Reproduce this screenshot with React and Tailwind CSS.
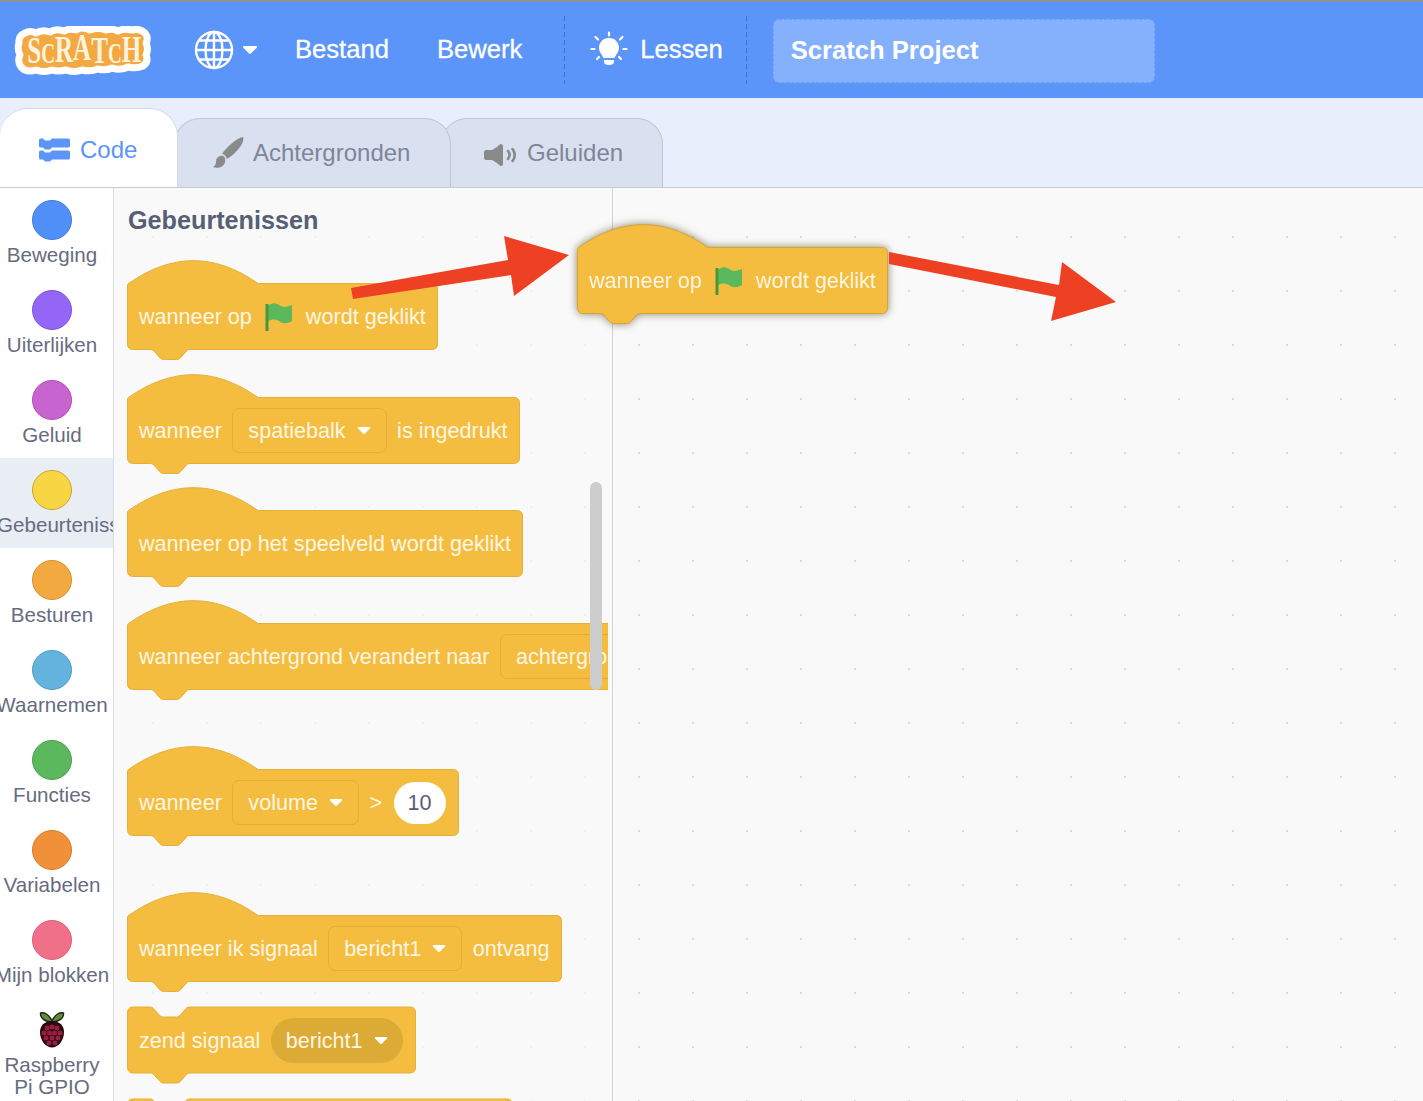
const caret = "M1 1.5 Q0 0 2 0 H12 Q14 0 13 1.5 L8 6.5 Q7 7.5 6 6.5 Z";

function Caret({ className = "w-[14px] h-[8px]" }) {
  return (
    <svg viewBox="0 0 14 8" className={className + " shrink-0"}>
      <path d={caret} fill="#ffffff" />
    </svg>
  );
}

function Flag() {
  return (
    <svg viewBox="0 0 27 28" className="w-[27px] h-[28px] shrink-0">
      <path d="M3 3 C7 -1 11 0 14 2 C18 5 22 4 27 2 V18 C22 21 18 21 14 18 C10 16 7 16 3 18 Z" fill="#5cb85c" />
      <rect x="0.5" y="1" width="3" height="27" fill="#45993d" />
    </svg>
  );
}

function notch() {
  return "c-2.2 0 -3.3 1.2 -4.4 2.5 l-4.4 5 c-1.1 1.2 -2.2 2.5 -4.4 2.5 h-13.2 c-2.2 0 -3.3 -1.3 -4.4 -2.5 l-4.4 -5 c-1.1 -1.3 -2.2 -2.5 -4.4 -2.5";
}

function hatPath(w, h) {
  return `M0.5 25 C0.5 24.5 1 24 1.5 23.5 C45 -7 88 -7 131 23.5 H${w - 5.5} a5 5 0 0 1 5 5 V${h - 15.5} a5 5 0 0 1 -5 5 H63 ${notch()} H5.5 a5 5 0 0 1 -5 -5 Z`;
}

function stackPath(w, h) {
  return `M0.5 6 a5 5 0 0 1 5 -5 H23 c2.2 0 3.3 1.2 4.4 2.5 l4.4 5 c1.1 1.2 2.2 2.5 4.4 2.5 h13.2 c2.2 0 3.3 -1.3 4.4 -2.5 l4.4 -5 c1.1 -1.3 2.2 -2.5 4.4 -2.5 H${w - 5.5} a5 5 0 0 1 5 5 V${h - 16} a5 5 0 0 1 -5 5 H63 ${notch()} H5.5 a5 5 0 0 1 -5 -5 Z`;
}

function Block({ w, h = 100, stack, mt, children, stroke = "#e6b038" }) {
  return (
    <div className="relative shrink-0" style={{ width: w, height: h, marginTop: mt }}>
      <svg className="absolute left-0 top-0 overflow-visible" width={w} height={h} viewBox={`0 0 ${w} ${h}`}>
        <path d={stack ? stackPath(w, h) : hatPath(w, h)} fill="#f4bd3f" stroke={stroke} strokeWidth="1" />
      </svg>
      <div
        className={
          "absolute left-0 right-0 flex items-center gap-[10.5px] px-[12px] whitespace-nowrap text-[21.6px] leading-none text-[#fff6e3] " +
          (stack ? "top-[1px] h-[67px]" : "top-[23px] h-[67px]")
        }
      >
        {children}
      </div>
    </div>
  );
}

function Field({ children, round }) {
  return (
    <div
      className={
        "flex h-[45px] shrink-0 items-center gap-[11px] px-[15px] " +
        (round ? "rounded-full bg-[#dcab36]" : "rounded-[7px] border border-[#e3ae37] bg-[#f4bd3f]")
      }
    >
      <span>{children}</span>
      <Caret />
    </div>
  );
}

const cats = [
  ["Beweging", "bg-[#4f8ff7] border-[#3f7bdc]"],
  ["Uiterlijken", "bg-[#9566f5] border-[#8052dd]"],
  ["Geluid", "bg-[#c764d0] border-[#b04fb8]"],
  ["Gebeurtenissen", "bg-[#f8d643] border-[#cfa22f]"],
  ["Besturen", "bg-[#f2a93f] border-[#d8922c]"],
  ["Waarnemen", "bg-[#64b3de] border-[#4e9cc4]"],
  ["Functies", "bg-[#5cb85c] border-[#4ea04c]"],
  ["Variabelen", "bg-[#f09038] border-[#d97b28]"],
  ["Mijn blokken", "bg-[#ef7088] border-[#dd5f78]"],
];

function Raspberry() {
  const dots = [
    [9, 17], [14, 16], [19, 17], [6, 22], [11.5, 22], [16.5, 22], [22, 22],
    [8, 27], [14, 27], [20, 27], [11, 32], [17, 32],
  ];
  return (
    <svg viewBox="0 0 28 37" className="h-[37px] w-[28px]">
      <path d="M14 10 C11 3 6 1 2.5 2 C2 7 7 11 14 11 Z" fill="#5d8f3a" stroke="#20261a" strokeWidth="1.4" />
      <path d="M14 10 C17 3 22 1 25.5 2 C26 7 21 11 14 11 Z" fill="#5d8f3a" stroke="#20261a" strokeWidth="1.4" />
      <path d="M14 10 C22 10 26 15 26 21 C26 30 20 36.5 14 36.5 C8 36.5 2 30 2 21 C2 15 6 10 14 10 Z" fill="#2a0b14" />
      {dots.map(([x, y]) => (
        <circle key={x + "-" + y} cx={x} cy={y} r="2.5" fill="#9e1b40" />
      ))}
    </svg>
  );
}

function Sidebar() {
  return (
    <div className="h-full w-[114px] shrink-0 overflow-hidden border-r border-[#d9dce3] bg-white text-[20.6px] leading-[22px] text-[#666c80]">
      {cats.map(([name, color]) => {
        const active = name === "Gebeurtenissen";
        return (
          <div
            key={name}
            className={"flex h-[90px] flex-col items-center pr-[9px] pt-3 " + (active ? "bg-[#e9eef4]" : "")}
          >
            <div className={"h-[40px] w-[40px] shrink-0 rounded-full border " + color} />
            <div className={"mt-[4px] whitespace-nowrap " + (active ? "-ml-[3px] self-start" : "")}>{name}</div>
          </div>
        );
      })}
      <div className="flex flex-col items-center pr-[9px] pt-[13px] text-center">
        <Raspberry />
        <div className="mt-[6px]">
          Raspberry
          <br />
          Pi GPIO
        </div>
      </div>
    </div>
  );
}

function Palette() {
  return (
    <div className="relative h-full w-[499px] shrink-0 overflow-hidden border-r border-[#cfd3da] bg-[#f9f9f9] bg-[radial-gradient(circle,#f0f0f0_1px,transparent_1.5px)] bg-[length:54px_54px] bg-[position:12px_22px]">
      <div className="h-full w-[494px] overflow-hidden pl-[13px] pt-[16px]">
        <div className="ml-px text-[25.2px] font-bold leading-[32px] text-[#575e75]">Gebeurtenissen</div>
        <Block w={311} mt={24}>
          <span>wanneer op</span>
          <span className="ml-[3px]"><Flag /></span>
          <span className="ml-[3px]">wordt geklikt</span>
        </Block>
        <Block w={393} mt={14}>
          <span>wanneer</span>
          <Field>spatiebalk</Field>
          <span>is ingedrukt</span>
        </Block>
        <Block w={396} mt={13}>
          <span>wanneer op het speelveld wordt geklikt</span>
        </Block>
        <Block w={560} mt={13}>
          <span>wanneer achtergrond verandert naar</span>
          <Field>achtergrond1</Field>
        </Block>
        <Block w={332} mt={46}>
          <span>wanneer</span>
          <Field>volume</Field>
          <span>&gt;</span>
          <div className="ml-px flex h-[42px] w-[52px] items-center justify-center rounded-full bg-white text-[#575e75]">10</div>
        </Block>
        <Block w={435} mt={46}>
          <span>wanneer ik signaal</span>
          <Field>bericht1</Field>
          <span>ontvang</span>
        </Block>
        <Block w={289} h={78} stack mt={14}>
          <span>zend signaal</span>
          <Field round>bericht1</Field>
        </Block>
        <Block w={386} h={78} stack mt={14} />
      </div>
      <div className="absolute left-[476px] top-[294px] h-[208px] w-[12px] rounded-full bg-[#cdcdcd]" />
    </div>
  );
}

function Logo() {
  return (
    <svg viewBox="0 0 138 49" className="h-[49px] w-[138px] shrink-0">
      <path
        d="M11 7 Q16 4 22 7 Q28 3 36 6 Q42 2 50 5 Q56 2 62 4 Q68 0 76 4 Q84 1 92 4 Q98 2 104 5 Q110 2 118 4 Q126 2 131 7 Q135 12 132 17 Q135 23 132 29 Q135 36 129 40 Q122 43 114 41 Q106 45 98 42 Q92 45 84 43 Q76 46 68 44 Q60 47 52 44 Q44 46 38 44 Q30 47 22 44 Q12 47 7 41 Q3 35 6 29 Q3 23 5 17 Q4 10 11 7Z"
        fill="#f3a842"
        stroke="#ffffff"
        strokeWidth="7"
        strokeLinejoin="round"
      />
      <text transform="scale(0.66 1)" fontFamily="'Liberation Serif', serif" fontWeight="700" fontSize="38" fill="#fff3dc">
        <tspan x="20" y="37">S</tspan>
        <tspan y="37" fontSize="29">C</tspan>
        <tspan y="36">R</tspan>
        <tspan y="34">A</tspan>
        <tspan y="37">T</tspan>
        <tspan y="37" fontSize="29">C</tspan>
        <tspan y="36">H</tspan>
      </text>
    </svg>
  );
}

function Globe() {
  return (
    <svg viewBox="0 0 40 40" className="h-[40px] w-[40px] shrink-0" fill="none" stroke="#ffffff" strokeWidth="2.4">
      <circle cx="20" cy="20" r="18" />
      <ellipse cx="20" cy="20" rx="8.5" ry="18" />
      <path d="M20 2 V38 M2 20 H38 M5 10.5 H35 M5 29.5 H35" />
    </svg>
  );
}

function Bulb() {
  return (
    <svg viewBox="0 0 38 38" className="h-[38px] w-[38px] shrink-0">
      <g stroke="#ffffff" strokeWidth="2.2" strokeLinecap="round">
        <path d="M19 1.5 V4.5 M5.5 6 L8 8.5 M32.5 6 L30 8.5 M1.5 18 H4.5 M33.5 18 H36.5 M7 28 L9 26 M31 28 L29 26" />
      </g>
      <path d="M19 7 C12.5 7 9 12 9 17 C9 21 12 23.5 13.5 27 H24.5 C26 23.5 29 21 29 17 C29 12 25.5 7 19 7 Z" fill="#ffffff" />
      <path d="M14 29 H24 V31 C24 33 22 34 19 34 H19 C16 34 14 33 14 31 Z" fill="#ffffff" />
    </svg>
  );
}

function Divider({ ml }) {
  return (
    <div className={"h-[68px] w-px shrink-0 bg-[repeating-linear-gradient(to_bottom,#4273c6_0,#4273c6_5px,transparent_5px,transparent_8px)] " + ml} />
  );
}

function Header() {
  return (
    <div className="flex h-[98px] shrink-0 items-center border-t-2 border-[#8e9399] bg-[#5c95fa] text-[25.6px] leading-none text-white">
      <div className="ml-[14px]"><Logo /></div>
      <div className="ml-[42px]"><Globe /></div>
      <div className="ml-[8px]"><Caret className="w-[16px] h-[9px]" /></div>
      <span className="ml-[37px] [-webkit-text-stroke:0.3px_#ffffff]">Bestand</span>
      <span className="ml-[48px] [-webkit-text-stroke:0.3px_#ffffff]">Bewerk</span>
      <Divider ml="ml-[42px]" />
      <div className="ml-[25px]"><Bulb /></div>
      <span className="ml-[12px] [-webkit-text-stroke:0.3px_#ffffff]">Lessen</span>
      <Divider ml="ml-[23px]" />
      <div className="ml-[26px] mt-[2px] flex h-[64px] w-[382px] items-center rounded-[6px] border border-dashed border-[#6f9ff0] bg-[#85b0fb] pl-[17px] font-bold">
        Scratch Project
      </div>
    </div>
  );
}

function CodeIcon() {
  return (
    <svg viewBox="0 0 32 24" className="h-[24px] w-[32px] shrink-0" fill="#5c95fa">
      <path d="M1 2 Q1 0.5 2.5 0.5 H5 L7 2.5 H12 L14 0.5 H30 Q32 0.5 32 2 V8 Q32 9.5 30 9.5 H14 L12 11.5 H7 L5 9.5 H2.5 Q1 9.5 1 8 Z" />
      <path d="M1 14 Q1 12.5 2.5 12.5 H5 L7 14.5 H12 L14 12.5 H30 Q32 12.5 32 14 V20 Q32 21.5 30 21.5 H14 L12 23.5 H7 L5 21.5 H2.5 Q1 21.5 1 20 Z" />
    </svg>
  );
}

function BrushIcon() {
  return (
    <svg viewBox="0 0 32 34" className="h-[34px] w-[32px] shrink-0" fill="#8a8a8a">
      <path d="M31 1 C32 2 31 7 28 11 C25 15 20 20 15 23 C14 20 12 18 10 18 C14 12 24 2 31 1 Z" />
      <path d="M8 20 C12 19 14 22 13 26 C12 31 6 33 1 31 C3 30 4 28 4 26 C4 23 5 21 8 20 Z" />
    </svg>
  );
}

function SoundIcon() {
  return (
    <svg viewBox="0 0 32 24" className="mt-[4px] h-[24px] w-[32px] shrink-0">
      <path d="M17 1 C18 1 19 2 19 3 V21 C19 22 18 23 17 23 C16 23 15 22 13 20 L8 17 H2 C1 17 0 16 0 15 V9 C0 8 1 7 2 7 H8 L13 4 C15 2 16 1 17 1 Z" fill="#8a8a8a" />
      <path d="M24 8 C26 10.5 26 13.5 24 16 M28.5 6 C31.5 10 31.5 14 28.5 18" fill="none" stroke="#8a8a8a" strokeWidth="2.6" strokeLinecap="round" />
    </svg>
  );
}

function Tabs() {
  return (
    <div className="flex h-[90px] shrink-0 items-end border-b border-[#c4cad6] bg-[#e8eefc] text-[24px] leading-none">
      <div className="relative z-30 flex h-[79px] w-[178px] items-center gap-[10px] rounded-t-[28px] border-r border-t border-[#d5dae4] bg-white pt-[3px] pl-[38px] text-[#5c95fa]">
        <CodeIcon />
        <span>Code</span>
      </div>
      <div className="relative z-20 -ml-[4px] flex h-[69px] w-[277px] items-center gap-[9px] rounded-t-[26px] border border-b-0 border-[#c0c6d2] bg-[#d9e0ef] pl-[37px] text-[#7f8598]">
        <BrushIcon />
        <span>Achtergronden</span>
      </div>
      <div className="relative z-10 -ml-[10px] flex h-[69px] w-[222px] items-center gap-[11px] rounded-t-[26px] border border-b-0 border-[#c0c6d2] bg-[#d9e0ef] pl-[42px] text-[#7f8598]">
        <SoundIcon />
        <span>Geluiden</span>
      </div>
    </div>
  );
}

function Arrows() {
  return (
    <svg className="pointer-events-none absolute left-0 top-0 z-50" width="1423" height="1101" viewBox="0 0 1423 1101">
      <path d="M351 288 L508 260 L504 236 L569 255 L514 296 L511 275 L353 299 Z" fill="#ee4023" />
      <path d="M889 252 L1059 285 L1062 262 L1116 302 L1051 321 L1056 297 L889 264 Z" fill="#ee4023" />
    </svg>
  );
}

export default function App() {
  return (
    <div className="relative flex h-[1101px] w-[1423px] flex-col overflow-hidden bg-white font-['Liberation_Sans',Arial,sans-serif]">
      <Header />
      <Tabs />
      <div className="flex min-h-0 flex-1">
        <Sidebar />
        <Palette />
        <div className="h-full flex-1 bg-[#f9f9f9] bg-[radial-gradient(circle,#dcdcdc_1px,transparent_1.5px)] bg-[length:54px_54px] bg-[position:-1px_22px]" />
      </div>
      <div className="absolute left-[577px] top-[224px] z-40 drop-shadow-[0_0_4px_rgba(70,55,10,0.6)]">
        <Block w={311} stroke="#d6a535">
          <span>wanneer op</span>
          <span className="ml-[3px]"><Flag /></span>
          <span className="ml-[3px]">wordt geklikt</span>
        </Block>
      </div>
      <Arrows />
    </div>
  );
}
